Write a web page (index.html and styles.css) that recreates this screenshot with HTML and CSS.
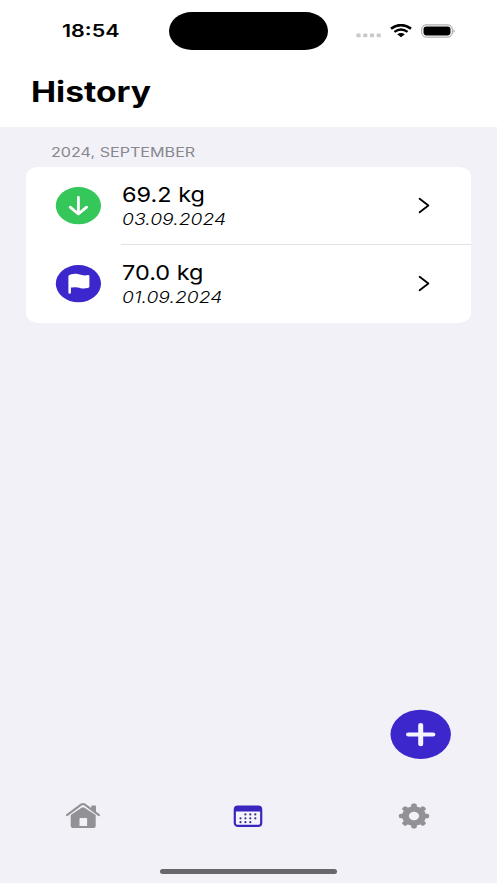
FILE: index.html
```html
<!DOCTYPE html>
<html lang="en">
<head>
<meta charset="utf-8">
<title>History</title>
<link rel="stylesheet" href="styles.css">
</head>
<body>
<div class="app">
  <header class="header">
    <div class="status">
      <div class="time"><span class="wide wide-time">18:54</span></div>
      <div class="island"></div>
      <div class="indicators">
        <svg class="dots" width="25" height="5" viewBox="0 0 25 5" fill="#c9c9cb"><rect x="0.4" y="0.5" width="4.2" height="3.8" rx="1"/><rect x="7.2" y="0.5" width="4.2" height="3.8" rx="1"/><rect x="13.9" y="0.5" width="4.2" height="3.8" rx="1"/><rect x="20.6" y="0.5" width="4.2" height="3.8" rx="1"/></svg>
        <svg class="wifi" width="22" height="14" viewBox="0 0 22 14" fill="none" stroke="#000"><path d="M1 4.6Q11-2.4 21 4.6" stroke-width="2.6"/><path d="M4.4 7.9Q11 3 17.6 7.9" stroke-width="2.4"/><path d="M7.2 10.3Q11 7.6 14.8 10.3L11 13.2Z" fill="#000" stroke="none"/></svg>
        <svg class="battery" width="35" height="14" viewBox="0 0 35 14"><rect x="0.7" y="0.9" width="30.6" height="12.2" rx="4.4" fill="none" stroke="#999" stroke-width="1"/><rect x="2.5" y="2.6" width="27" height="8.8" rx="2.8"/><path d="M32.6 5.2q2 1.8 0 3.8z" fill="#888"/></svg>
      </div>
    </div>
    <h1 class="title"><span class="wide wide-title">History</span></h1>
  </header>
  <main class="content">
    <h2 class="month"><span class="wide wide-month">2024, SEPTEMBER</span></h2>
    <section class="card">
      <div class="row">
        <svg class="badge" width="46" height="38" viewBox="0 0 46 38"><ellipse cx="23.4" cy="18.7" rx="22.6" ry="18.6" fill="#35c759"/><path d="M23.4 10.3V26.8M15.2 20.2L23.4 27L31.6 20.2" fill="none" stroke="#fff" stroke-width="2.8" stroke-linecap="round" stroke-linejoin="round"/></svg>
        <div class="entry">
          <div class="weight"><span class="wide wide-weight">69.2 kg</span></div>
          <div class="date"><span class="wide wide-date">03.09.2024</span></div>
        </div>
        <svg class="chevron" width="12" height="17" viewBox="0 0 12 17"><path d="M1.6 1.8L10.4 8.5L1.6 15.2" fill="none" stroke="#000" stroke-width="1.8" stroke-linecap="round" stroke-linejoin="round"/></svg>
      </div>
      <div class="row">
        <svg class="badge" width="46" height="38" viewBox="0 0 46 38"><ellipse cx="23.4" cy="18.7" rx="22.6" ry="18.6" fill="#3b27cc"/><path transform="translate(.6)" d="M12.8 11.1Q12.8 9.9 15 9.4C20 8.2 23 9.2 26 10.1C29 10.9 31 10.4 32.4 10Q33.8 9.8 33.8 11V21.6Q33.8 22.7 32 23.1C28 24 25 23.2 22 22.5C19 21.9 17 22.1 15.3 22.6V28Q14.9 28.7 14 28.7Q13 28.7 12.8 28Z" fill="#fff"/></svg>
        <div class="entry">
          <div class="weight"><span class="wide wide-weight">70.0 kg</span></div>
          <div class="date"><span class="wide wide-date">01.09.2024</span></div>
        </div>
        <svg class="chevron" width="12" height="17" viewBox="0 0 12 17"><path d="M1.6 1.8L10.4 8.5L1.6 15.2" fill="none" stroke="#000" stroke-width="1.8" stroke-linecap="round" stroke-linejoin="round"/></svg>
      </div>
    </section>
  </main>
  <div class="actions">
    <svg width="62" height="50" viewBox="0 0 62 50"><ellipse cx="30.7" cy="25.3" rx="30.2" ry="24.6" fill="#3b27cc"/><path transform="translate(-.3 .5)" d="M31 13.4a2.5 2.1 0 0 1 2.5 2.1v7.4h9.8a2.3 2 0 0 1 0 4.2h-9.8v7.6a2.5 2.1 0 0 1-5 0v-7.6h-9.8a2.3 2 0 0 1 0-4.2h9.8v-7.4a2.5 2.1 0 0 1 2.5-2.1z" fill="#f5f3ff"/></svg>
  </div>
  <nav class="tabs">
    <div class="tab">
      <svg width="36" height="28" viewBox="0 0 36 28"><path d="M2 13.1L16.1 2.6Q18 1.4 19.9 2.6L34 13.1" fill="none" stroke="#929296" stroke-width="2.1" stroke-linecap="round" stroke-linejoin="round"/><path d="M27 3.6h3.2q.8 0 .8.8v6L26.2 7V4.4q0-.8.8-.8z" fill="#929296"/><path d="M5.7 13.1L16.5 5.7Q18 4.7 19.5 5.7L30.7 13.1V23.4Q30.7 26 27.8 26H8.6Q5.7 26 5.7 23.4ZM15.3 15.9Q14.5 15.9 14.5 16.7V23.9H22.1V16.7Q22.1 15.9 21.3 15.9Z" fill="#929296" fill-rule="evenodd"/></svg>
    </div>
    <div class="tab">
      <svg width="30" height="24" viewBox="0 0 30 24"><rect x="1.8" y="2.5" width="26.4" height="19.4" rx="3" fill="#f5f4fc" stroke="#3927bd" stroke-width="2.2"/><path d="M1.5 7.4V4.5Q1.5 2 4.5 2h21q3 0 3 2.5v2.9z" fill="#3927bd"/><g fill="#39337f"><circle cx="12.4" cy="10.4" r="1.1"/><circle cx="17.3" cy="10.4" r="1.1"/><circle cx="22.3" cy="10.4" r="1.1"/><circle cx="7.5" cy="14.3" r="1.1"/><circle cx="12.4" cy="14.3" r="1.1"/><circle cx="17.3" cy="14.3" r="1.1"/><circle cx="22.3" cy="14.3" r="1.1"/><circle cx="7.5" cy="18.2" r="1.1"/><circle cx="12.4" cy="18.2" r="1.1"/><circle cx="17.3" cy="18.2" r="1.1"/></g></svg>
    </div>
    <div class="tab">
      <svg width="32" height="26" viewBox="-16 -13 32 26"><g transform="scale(1.22 1)" fill="#929296"><circle r="7" fill="none" stroke="#929296" stroke-width="5.6"/><g id="teeth"><rect x="-2.3" y="-12.4" width="4.6" height="5" rx="1.6"/><rect x="-2.3" y="7.4" width="4.6" height="5" rx="1.6"/><rect x="-12.4" y="-2.3" width="5" height="4.6" rx="1.6"/><rect x="7.4" y="-2.3" width="5" height="4.6" rx="1.6"/></g><use href="#teeth" transform="rotate(45)"/></g></svg>
    </div>
  </nav>
  <footer class="home"><div class="home-bar"></div></footer>
</div>
</body>
</html>
```
FILE: styles.css
```css
* { box-sizing: border-box; }
body { margin: 0; font-family: Inter, "Liberation Sans", sans-serif; color: #000; background: #f2f1f8; }
svg { display: block; flex: none; }
.app { width: 497px; height: 883px; display: flex; flex-direction: column; overflow: hidden; background: #f2f1f8; }
.header { height: 126.5px; flex: none; background: #fff; }
.status { height: 62px; display: grid; grid-template-columns: 169px 159px 1fr; align-items: center; }
.time { padding-left: 62px; font-size: 17px; line-height: 20px; font-weight: 600; }
.island { height: 38px; border-radius: 23px / 19px; background: #000; }
.indicators { display: flex; align-items: center; padding-left: 28px; }
.dots { margin-top: 8px; }
.wifi { margin-left: 9px; }
.battery { margin-left: 9px; }
.title { margin: 13px 0 0 30.5px; font-size: 28px; line-height: 34px; font-weight: 700; }
.wide { display: inline-block; white-space: nowrap; transform-origin: left center; }
.wide-time { transform: scaleX(1.265); }
.wide-title { transform: scaleX(1.2); }
.wide-month { transform: scaleX(1.24); }
.wide-weight { transform: scaleX(1.145); }
.wide-date { transform: scaleX(1.17); }
.content { flex: 1; padding: 16.5px 26px 0 25.5px; }
.month { margin: 0 0 6px 25.5px; height: 18px; font-size: 13px; line-height: 18px; font-weight: 400; color: #88878d; }
.card { height: 155.5px; border-radius: 12px / 10px; background: #fff; }
.row { height: 77.5px; display: flex; align-items: center; padding: 0 41px 0 29.5px; }
.row + .row { background: linear-gradient(#e2e2e5, #e2e2e5) 95px 0 / 351px 1px no-repeat; height: 78px; margin-top: -.5px; padding-top: 1.5px; }
.entry { flex: 1; margin-left: 21px; }
.weight { font-size: 20.5px; line-height: 26px; }
.date { font-size: 16.5px; line-height: 22px; font-weight: 300; font-style: italic; }
.actions { display: flex; justify-content: flex-end; padding-right: 45px; margin-bottom: 29px; }
.tabs { height: 56px; flex: none; display: grid; grid-template-columns: 165px 166px 166px; align-items: center; }
.tab { display: flex; justify-content: center; }
.home { height: 39px; flex: none; display: flex; justify-content: center; align-items: flex-end; padding-bottom: 9px; }
.home-bar { width: 177px; height: 5px; border-radius: 3px; background: #68676b; }
```
